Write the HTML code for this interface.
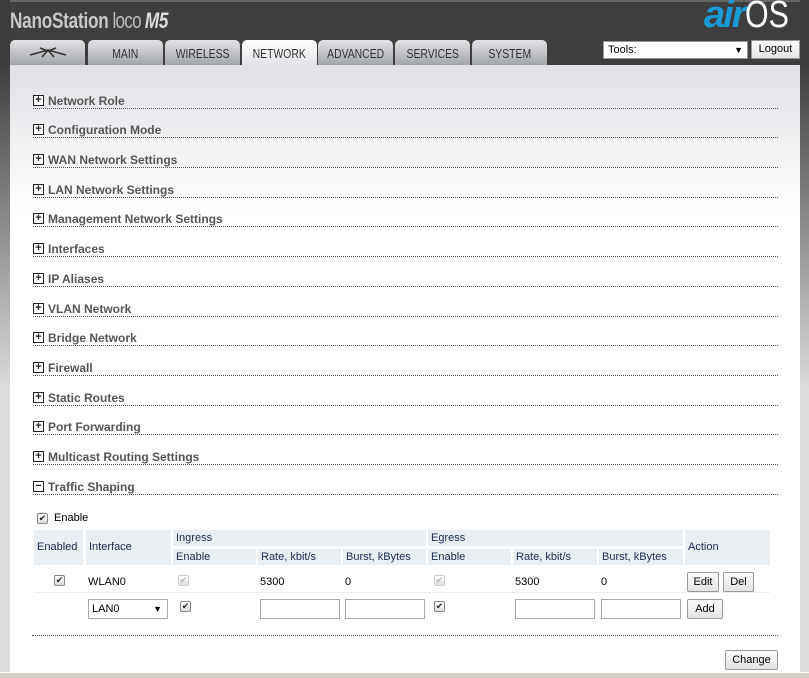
<!DOCTYPE html>
<html><head><meta charset="utf-8"><style>
*{margin:0;padding:0;box-sizing:border-box}
body{width:809px;height:678px;position:relative;overflow:hidden;font-family:"Liberation Sans",sans-serif;background:#dcdcdc}
.side{position:absolute;top:0;width:10px;height:672px;background:linear-gradient(#3c3c3c 0,#3c3c3c 60px,#dcdcdc 390px,#dcdcdc)}
.hdr{position:absolute;left:0;top:0;width:809px;height:66px;background:#3e3e3e;border-top:2px solid #666}
.logo{position:absolute;left:10px;top:8px;color:#c8c8c8;font-size:22px;font-weight:bold;transform:scaleX(.78);transform-origin:left;letter-spacing:-.3px}
.logo .l{font-weight:normal;color:#bbb;letter-spacing:-1px}
.logo .m{font-style:italic;color:#ddd;font-weight:900}
.air{position:absolute;left:704px;top:-6px;font-size:38px;font-style:italic;font-weight:bold;color:#1a9ad6;letter-spacing:-2px}
.os{position:absolute;left:745px;top:-6px;font-size:38px;color:#fff;transform:scaleX(.8);transform-origin:left}
.tab{position:absolute;top:40px;height:26px;width:75px;border-radius:5px 5px 0 0;background:linear-gradient(#e2e3e5,#9fa2a7);color:#333;font-size:13px;text-align:center;line-height:27px;transform-origin:center}
.tab span{display:inline-block;transform:scaleX(.8)}
.tab.a{background:linear-gradient(#fff,#e0e2e6);height:26px}
.tools{position:absolute;left:603px;top:41px;width:145px;height:18px;background:#fff;border:1px solid #999;font-size:11px;padding-left:4px;line-height:16px}
.tools b{position:absolute;right:4px;font-size:9px;font-weight:normal}
.logout{position:absolute;left:751px;top:40px;width:49px;height:19px;background:linear-gradient(#fafafa,#e6e6e6);border:1px solid #999;font-size:11px;text-align:center;line-height:17px}
.main{position:absolute;left:10px;top:65px;width:790px;height:607px;background:linear-gradient(#dfe1e5 0,#fff 150px)}
.sec{position:absolute;left:33px;width:745px;height:14px;border-bottom:1px dotted #555;font-size:12px;font-weight:bold;color:#555}
.sec i{position:absolute;left:0;top:0;width:11px;height:11px;border:1px solid #222;font-style:normal;font-size:11px;line-height:8px;text-align:center;color:#222;background:#fff}
.sec span{position:absolute;left:15px;top:-1px}
.t{position:absolute;font-size:11px;color:#000}
.th{position:absolute;background:#e8eef1;font-size:11px;color:#1c2a55;padding-left:3px}
.cb{position:absolute;width:11px;height:11px;border:1px solid #888;border-radius:2px;background:linear-gradient(#fff,#ddd);font-size:9px;line-height:9px;text-align:center;color:#222}
.cb.d{color:#bbb;border-color:#ccc}
.in{position:absolute;height:20px;background:#fff;border:1px solid #aaa}
.btn{position:absolute;height:20px;background:linear-gradient(#fafafa,#e4e4e4);border:1px solid #999;font-size:11px;text-align:center;line-height:18px;border-radius:2px}
.hr{position:absolute;height:1px;background:#e8eef1}
.bottom{position:absolute;left:0;top:672px;width:809px;height:6px;background:#d4d0c8;border-top:1px solid #fff}
</style></head><body>
<div class="hdr"></div>
<div class="side" style="left:0"></div>
<div class="side" style="left:800px;width:9px"></div>
<div class="logo">NanoStation<span class="l"> loco </span><span class="m">M5</span></div>
<div class="air">air</div><div class="os">OS</div>
<div class="tab" style="left:10px"><svg width="40" height="12" viewBox="0 0 40 12"><path d="M2 9 L20 4 L38 9 M12 2 L20 5 L28 2 M20 4 L14 11 M20 4 L26 11" stroke="#333" stroke-width="1.5" fill="none"/></svg></div>
<div class="tab" style="left:88px"><span>MAIN</span></div>
<div class="tab" style="left:165px"><span>WIRELESS</span></div>
<div class="tab a" style="left:242px"><span>NETWORK</span></div>
<div class="tab" style="left:318px"><span>ADVANCED</span></div>
<div class="tab" style="left:395px"><span>SERVICES</span></div>
<div class="tab" style="left:472px"><span>SYSTEM</span></div>
<div class="tools">Tools:<b>▼</b></div>
<div class="logout">Logout</div>
<div class="main"></div>

<div class="sec" style="top:95px"><i>+</i><span>Network Role</span></div>
<div class="sec" style="top:124px"><i>+</i><span>Configuration Mode</span></div>
<div class="sec" style="top:154px"><i>+</i><span>WAN Network Settings</span></div>
<div class="sec" style="top:184px"><i>+</i><span>LAN Network Settings</span></div>
<div class="sec" style="top:213px"><i>+</i><span>Management Network Settings</span></div>
<div class="sec" style="top:243px"><i>+</i><span>Interfaces</span></div>
<div class="sec" style="top:273px"><i>+</i><span>IP Aliases</span></div>
<div class="sec" style="top:303px"><i>+</i><span>VLAN Network</span></div>
<div class="sec" style="top:332px"><i>+</i><span>Bridge Network</span></div>
<div class="sec" style="top:362px"><i>+</i><span>Firewall</span></div>
<div class="sec" style="top:392px"><i>+</i><span>Static Routes</span></div>
<div class="sec" style="top:421px"><i>+</i><span>Port Forwarding</span></div>
<div class="sec" style="top:451px"><i>+</i><span>Multicast Routing Settings</span></div>
<div class="sec" style="top:481px"><i>−</i><span>Traffic Shaping</span></div>

<div class="cb" style="left:37px;top:513px">✔</div><div class="t" style="left:54px;top:512px">Enable</div>

<div class="th" style="left:34px;top:530px;width:49px;height:35px;line-height:35px">Enabled</div>
<div class="th" style="left:86px;top:530px;width:85px;height:35px;line-height:35px">Interface</div>
<div class="th" style="left:173px;top:530px;width:253px;height:16px;line-height:16px">Ingress</div>
<div class="th" style="left:173px;top:549px;width:83px;height:16px;line-height:16px">Enable</div>
<div class="th" style="left:258px;top:549px;width:83px;height:16px;line-height:16px">Rate, kbit/s</div>
<div class="th" style="left:343px;top:549px;width:83px;height:16px;line-height:16px">Burst, kBytes</div>
<div class="th" style="left:428px;top:530px;width:255px;height:16px;line-height:16px">Egress</div>
<div class="th" style="left:428px;top:549px;width:83px;height:16px;line-height:16px">Enable</div>
<div class="th" style="left:513px;top:549px;width:84px;height:16px;line-height:16px">Rate, kbit/s</div>
<div class="th" style="left:599px;top:549px;width:84px;height:16px;line-height:16px">Burst, kBytes</div>
<div class="th" style="left:685px;top:530px;width:85px;height:35px;line-height:35px">Action</div>

<div class="cb" style="left:54px;top:575px">✔</div>
<div class="t" style="left:88px;top:576px">WLAN0</div>
<div class="cb d" style="left:178px;top:575px">✔</div>
<div class="t" style="left:260px;top:576px">5300</div>
<div class="t" style="left:345px;top:576px">0</div>
<div class="cb d" style="left:434px;top:575px">✔</div>
<div class="t" style="left:515px;top:576px">5300</div>
<div class="t" style="left:601px;top:576px">0</div>
<div class="btn" style="left:687px;top:572px;width:32px">Edit</div>
<div class="btn" style="left:723px;top:572px;width:31px">Del</div>
<div class="hr" style="left:34px;top:592px;width:736px"></div>

<div class="in" style="left:88px;top:599px;width:80px;font-size:11px;line-height:18px;padding-left:3px">LAN0<span style="position:absolute;right:5px;font-size:9px">▼</span></div>
<div class="cb" style="left:180px;top:601px">✔</div>
<div class="in" style="left:260px;top:599px;width:80px"></div>
<div class="in" style="left:345px;top:599px;width:80px"></div>
<div class="cb" style="left:434px;top:601px">✔</div>
<div class="in" style="left:515px;top:599px;width:80px"></div>
<div class="in" style="left:601px;top:599px;width:80px"></div>
<div class="btn" style="left:687px;top:599px;width:36px">Add</div>

<div style="position:absolute;left:32px;top:635px;width:746px;border-top:1px dotted #555"></div>
<div class="btn" style="left:725px;top:650px;width:53px">Change</div>
<div class="bottom"></div>
</body></html>
